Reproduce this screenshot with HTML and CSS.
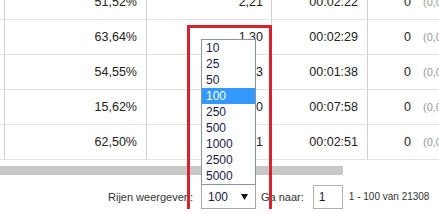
FILE: index.html
```html
<!DOCTYPE html>
<html lang="nl">
<head>
    <meta charset="UTF-8">
    <title>Rapport</title>
    <link rel="stylesheet" href="styles.css">
</head>
<body>
    <div class="report">
        <div class="grid">
            <div class="row">
                <div class="cell"></div>
                <div class="cell">51,52%</div>
                <div class="cell">2,21</div>
                <div class="cell">00:02:22</div>
                <div class="cell goals"><span class="n">0</span><span class="pct">(0,00%)</span></div>
            </div>
            <div class="row">
                <div class="cell"></div>
                <div class="cell">63,64%</div>
                <div class="cell">1,30</div>
                <div class="cell">00:02:29</div>
                <div class="cell goals"><span class="n">0</span><span class="pct">(0,00%)</span></div>
            </div>
            <div class="row">
                <div class="cell"></div>
                <div class="cell">54,55%</div>
                <div class="cell">1,73</div>
                <div class="cell">00:01:38</div>
                <div class="cell goals"><span class="n">0</span><span class="pct">(0,00%)</span></div>
            </div>
            <div class="row">
                <div class="cell"></div>
                <div class="cell">15,62%</div>
                <div class="cell">1,50</div>
                <div class="cell">00:07:58</div>
                <div class="cell goals"><span class="n">0</span><span class="pct">(0,00%)</span></div>
            </div>
            <div class="row">
                <div class="cell"></div>
                <div class="cell">62,50%</div>
                <div class="cell">2,31</div>
                <div class="cell">00:02:51</div>
                <div class="cell goals"><span class="n">0</span><span class="pct">(0,00%)</span></div>
            </div>
        </div>

        <div class="hscroll"><div class="thumb"></div></div>

        <div class="pager">
            <span class="label">Rijen weergeven:</span>
            <div class="rows-select">
                <span class="value">100</span>
                <svg class="arrow" width="7" height="6" viewBox="0 0 7 6"><polygon points="0,0 7,0 3.5,6" fill="#111"/></svg>
                <ul class="options">
                    <li>10</li>
                    <li>25</li>
                    <li>50</li>
                    <li class="active">100</li>
                    <li>250</li>
                    <li>500</li>
                    <li>1000</li>
                    <li>2500</li>
                    <li>5000</li>
                </ul>
                <div class="callout"></div>
            </div>
            <span class="goto">Ga naar:</span>
            <input class="page-input" type="text" value="1">
            <span class="range">1 - 100 van 21308</span>
        </div>
    </div>
</body>
</html>
```

FILE: styles.css
```css
* {
    box-sizing: border-box;
}

body {
    margin: 0;
    background: #fff;
    font-family: "Liberation Sans", Arial, sans-serif;
    color: #222;
    overflow: hidden;
}

.report {
    width: 439px;
}

.grid {
    margin-top: -15px;
}

.row {
    display: grid;
    grid-template-columns: 21px 142px 125px 96px 1fr;
    height: 35px;
    margin-left: -16px;
    border-bottom: 1px solid #e3e3e3;
    font-size: 12.5px;
}

.cell {
    display: flex;
    align-items: center;
    justify-content: flex-end;
    padding-right: 9px;
    border-right: 1px solid #d2d2d2;
    white-space: nowrap;
}

.row .cell:nth-child(3) {
    padding-right: 8px;
}

.cell.goals {
    justify-content: flex-start;
    padding-right: 0;
    border-right: none;
}

.goals .n {
    width: 43px;
    text-align: right;
}

.goals .pct {
    margin-left: 12px;
    color: #9a9a9a;
    font-size: 11px;
}

.hscroll {
    margin-top: 6px;
    height: 9px;
}

.hscroll .thumb {
    width: 343px;
    height: 100%;
    background: #c8c8c8;
}

.pager {
    display: flex;
    align-items: center;
    margin-top: 9px;
    height: 25px;
    color: #333;
    font-size: 11px;
}

.label {
    width: 193px;
    flex: none;
    text-align: right;
    margin-right: 8px;
}

.goto {
    margin-left: 5px;
    margin-right: 9px;
}

.rows-select {
    position: relative;
    display: flex;
    align-items: center;
    flex: none;
    width: 55px;
    height: 25px;
    padding: 0 7px 0 6px;
    border: 1px solid #a8a8a8;
    font-size: 12px;
    color: #23184a;
}

.rows-select .arrow {
    margin-left: auto;
}

.options {
    position: absolute;
    left: -1px;
    bottom: 100%;
    width: 55px;
    height: 146px;
    margin: 0;
    padding: 0;
    list-style: none;
    background: #fff;
    border: 1px solid #8497a8;
}

.options li {
    height: 16px;
    line-height: 16px;
    padding-left: 4px;
}

.options li.active {
    background: #3399ff;
    color: #fff;
}

.callout {
    position: absolute;
    left: -15px;
    top: -160px;
    width: 85px;
    height: 188px;
    border: 3px solid #d7232f;
}

.page-input {
    flex: none;
    width: 30px;
    height: 24px;
    padding: 0 0 0 5px;
    border: 1px solid #b0b0b0;
    font-family: inherit;
    font-size: 12px;
    color: #23184a;
}

.range {
    margin-left: 6px;
    font-size: 10px;
    white-space: nowrap;
}
```
